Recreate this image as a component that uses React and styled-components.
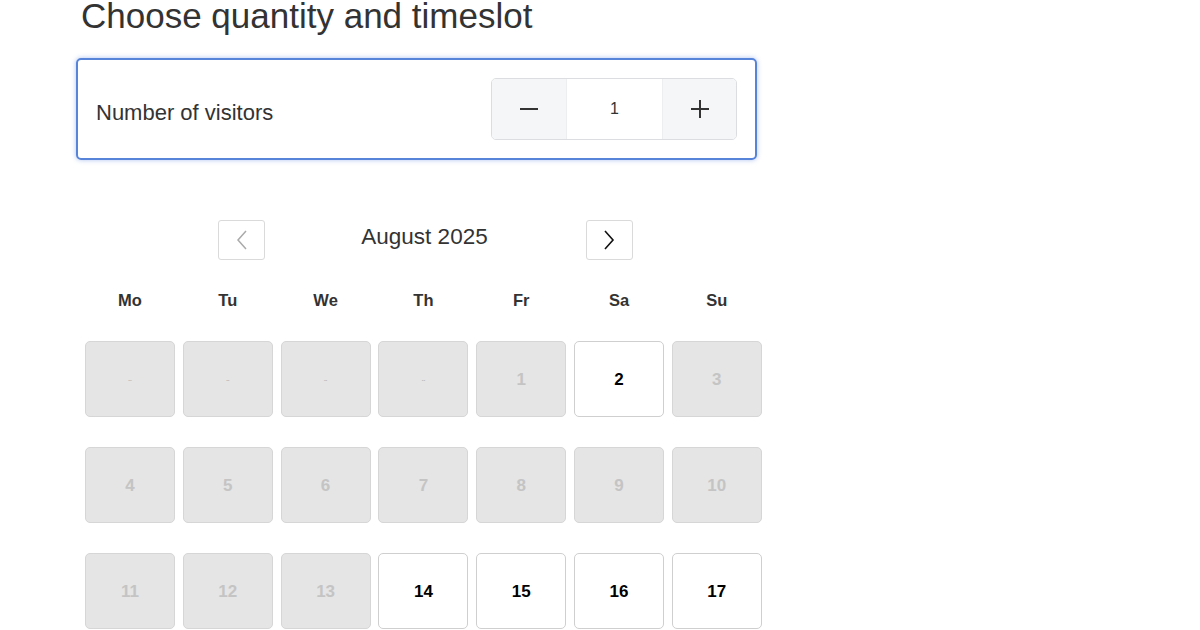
import React, { useState } from "react";
import styled, { createGlobalStyle } from "styled-components";

const GlobalStyle = createGlobalStyle`
  body {
    margin: 0;
    background: #fff;
    font-family: "Liberation Sans", Arial, sans-serif;
    color: #333;
  }
`;

const weekdays = ["Mo", "Tu", "We", "Th", "Fr", "Sa", "Su"];

const days = [
  { label: "--", blank: true },
  { label: "--", blank: true },
  { label: "--", blank: true },
  { label: "--", blank: true },
  { label: "1", off: true },
  { label: "2" },
  { label: "3", off: true },
  { label: "4", off: true },
  { label: "5", off: true },
  { label: "6", off: true },
  { label: "7", off: true },
  { label: "8", off: true },
  { label: "9", off: true },
  { label: "10", off: true },
  { label: "11", off: true },
  { label: "12", off: true },
  { label: "13", off: true },
  { label: "14" },
  { label: "15" },
  { label: "16" },
  { label: "17" },
];

export default function App() {
  const [count, setCount] = useState(1);

  return (
    <Page>
      <GlobalStyle />
      <Title>Choose quantity and timeslot</Title>
      <Card>
        <Label>Number of visitors</Label>
        <Stepper>
          <StepButton $w={74} onClick={() => setCount(Math.max(1, count - 1))}>
            <svg width="20" height="20" viewBox="0 0 20 20">
              <path d="M1 10h18" stroke="#333" strokeWidth="2" />
            </svg>
          </StepButton>
          <Value>{count}</Value>
          <StepButton $w={73} onClick={() => setCount(count + 1)}>
            <svg width="20" height="20" viewBox="0 0 20 20">
              <path d="M1 10h18M10 1v18" stroke="#333" strokeWidth="2" />
            </svg>
          </StepButton>
        </Stepper>
      </Card>

      <Calendar>
        <MonthNav>
          <NavButton>
            <svg width="14" height="22" viewBox="0 0 14 22">
              <path d="M11 2L3 11l8 9" fill="none" stroke="#aaa" strokeWidth="1.5" />
            </svg>
          </NavButton>
          <MonthTitle>August 2025</MonthTitle>
          <NavButton>
            <svg width="14" height="22" viewBox="0 0 14 22">
              <path d="M3 2l8 9-8 9" fill="none" stroke="#111" strokeWidth="1.6" />
            </svg>
          </NavButton>
        </MonthNav>

        <Weekdays>
          {weekdays.map((d) => (
            <Weekday key={d}>{d}</Weekday>
          ))}
        </Weekdays>

        <Grid>
          {days.map((d, i) => (
            <Day key={i} $off={d.off || d.blank} $blank={d.blank}>
              {d.label}
            </Day>
          ))}
        </Grid>
      </Calendar>
    </Page>
  );
}

const Page = styled.div`
  padding-left: 76px;
  width: 690px;
  height: 630px;
  overflow: hidden;
`;

const Title = styled.h1`
  margin: 0 0 0 5px;
  font-size: 35px;
  line-height: 32px;
  font-weight: 400;
  color: #333;
  white-space: nowrap;
`;

const Card = styled.div`
  margin-top: 26px;
  width: 681px;
  height: 102px;
  box-sizing: border-box;
  border: 2px solid #5783d9;
  border-radius: 5px;
  box-shadow: 0 0 5px rgba(70, 120, 220, 0.45);
  padding: 0 18px;
  display: flex;
  align-items: center;
  justify-content: space-between;
`;

const Label = styled.span`
  font-size: 22px;
  color: #333;
  padding-top: 7px;
`;

const Stepper = styled.div`
  display: flex;
  height: 62px;
  border: 1px solid #dcdde0;
  border-radius: 5px;
  overflow: hidden;
  box-sizing: border-box;
`;

const StepButton = styled.button`
  width: ${(p) => p.$w}px;
  border: 0;
  background: #f5f6f8;
  display: flex;
  align-items: center;
  justify-content: center;
  padding: 0;
  cursor: pointer;
`;

const Value = styled.div`
  width: 97px;
  box-sizing: border-box;
  display: flex;
  align-items: center;
  justify-content: center;
  background: #fff;
  border-left: 1px solid #eceef0;
  border-right: 1px solid #eceef0;
  font-size: 16px;
  color: #333;
`;

const Calendar = styled.div`
  margin-top: 60px;
  margin-left: 9px;
  width: 677px;
`;

const MonthNav = styled.div`
  margin-left: 133px;
  width: 415px;
  display: flex;
  align-items: center;
  justify-content: space-between;
`;

const NavButton = styled.button`
  width: 47px;
  height: 40px;
  box-sizing: border-box;
  border: 1px solid #dadada;
  border-radius: 3px;
  background: #fff;
  display: flex;
  align-items: center;
  justify-content: center;
  padding: 0;
`;

const MonthTitle = styled.div`
  font-size: 22.5px;
  color: #333;
  padding-right: 2px;
  margin-top: -6px;
`;

const Weekdays = styled.div`
  margin-top: 30px;
  display: grid;
  grid-template-columns: repeat(7, 90px);
  column-gap: 7.8px;
`;

const Weekday = styled.div`
  text-align: center;
  font-size: 16.5px;
  font-weight: 700;
  line-height: 20px;
  color: #333;
`;

const Grid = styled.div`
  margin-top: 31px;
  display: grid;
  grid-template-columns: repeat(7, 90px);
  column-gap: 7.8px;
  row-gap: 30px;
`;

const Day = styled.div`
  height: 76px;
  box-sizing: border-box;
  border: 1px solid ${(p) => (p.$off ? "#d6d6d6" : "#cfcfcf")};
  border-radius: 5px;
  background: ${(p) => (p.$off ? "#e5e5e5" : "#fff")};
  display: flex;
  align-items: center;
  justify-content: center;
  padding-top: 2px;
  font-size: ${(p) => (p.$blank ? "5px" : "17px")};
  font-weight: 700;
  color: ${(p) => (p.$blank ? "#b0b0b0" : p.$off ? "#c4c4c4" : "#000")};
`;
